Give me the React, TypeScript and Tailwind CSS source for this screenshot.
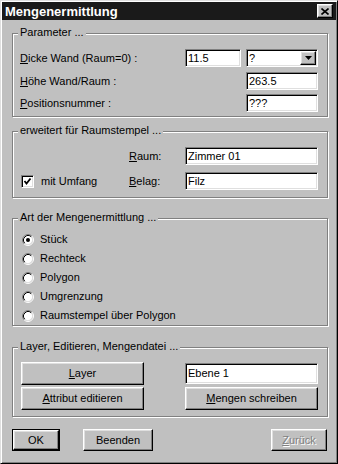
import React from "react"

// Win95-artige Rahmen
const raised =
  "bg-[#c0c0c0] border border-t-white border-l-white border-r-black border-b-black shadow-[inset_-1px_-1px_0_#808080,inset_1px_1px_0_#dfdfdf]"
const sunken =
  "bg-white border border-t-[#808080] border-l-[#808080] border-r-white border-b-white shadow-[inset_1px_1px_0_#000,inset_-1px_-1px_0_#dfdfdf]"

function U({ children }: { children: React.ReactNode }) {
  return <span className="underline decoration-1 underline-offset-[1px]">{children}</span>
}

function Group({ title, className, children }: { title: string; className: string; children?: React.ReactNode }) {
  return (
    <div className={`relative w-[316px] border border-[#808080] shadow-[1px_1px_0_#fff,inset_1px_1px_0_#fff] ${className}`}>
      <span className="absolute left-[5px] top-[-8px] bg-[#c0c0c0] px-[2px] leading-[13px]">{title}</span>
      {children}
    </div>
  )
}

function Feld({ value, className }: { value: string; className: string }) {
  return (
    <div className={`${sunken} flex items-center pl-[2px] leading-none ${className}`}>{value}</div>
  )
}

function Knopf({ children, className }: { children: React.ReactNode; className: string }) {
  return <div className={`${raised} flex items-center justify-center ${className}`}>{children}</div>
}

function Radio({ checked, label }: { checked?: boolean; label: string }) {
  return (
    <div className="flex h-[19px] items-center gap-[6px] pl-[9px]">
      <svg width="12" height="12" viewBox="0 0 12 12">
        <circle cx="6" cy="6" r="4.5" fill="#fff" />
        <path d="M2.11 9.89 A5.5 5.5 0 0 1 9.89 2.11" fill="none" stroke="#808080" />
        <path d="M9.89 2.11 A5.5 5.5 0 0 1 2.11 9.89" fill="none" stroke="#fff" />
        <path d="M2.82 9.18 A4.5 4.5 0 0 1 9.18 2.82" fill="none" stroke="#000" />
        <path d="M9.18 2.82 A4.5 4.5 0 0 1 2.82 9.18" fill="none" stroke="#dfdfdf" />
        {checked && <circle cx="6" cy="6" r="2" fill="#000" />}
      </svg>
      <span>{label}</span>
    </div>
  )
}

export default function App() {
  return (
    <div className="flex h-[464px] w-[338px] flex-col border border-t-[#dfdfdf] border-l-[#dfdfdf] border-r-black border-b-black bg-[#c0c0c0] font-['Liberation_Sans',Arial,sans-serif] text-[11px] leading-[13px] text-black shadow-[inset_1px_1px_0_#fff,inset_-1px_-1px_0_#808080]">
      {/* Titelleiste */}
      <div className="mx-[1px] mt-[1px] flex h-[18px] items-center bg-[#1a1a1a] pl-[3px]">
        <span className="flex-1 text-[13px] font-bold leading-[15px] text-white">Mengenermittlung</span>
        <Knopf className="mr-[3px] h-[14px] w-[16px]">
          <svg width="8" height="7" viewBox="0 0 8 7">
            <path d="M0.5 0.5 L7.5 6.5 M7.5 0.5 L0.5 6.5" stroke="#000" strokeWidth="1.6" />
          </svg>
        </Knopf>
      </div>

      <div className="ml-[11px] flex flex-col">
        {/* Parameter */}
        <Group title="Parameter ..." className="mt-[13px] h-[84px]">
          <div className="mt-[15px] flex h-[18px] items-center pl-[7px] pr-[9px]">
            <span className="flex-1">
              <U>D</U>icke Wand (Raum=0) :
            </span>
            <Feld value="11.5" className="h-full w-[56px]" />
            <div className={`${sunken} ml-[5px] flex h-full w-[72px] items-center`}>
              <span className="flex-1 pl-[2px] leading-none">?</span>
              <Knopf className="mr-[1px] h-[14px] w-[16px]">
                <svg width="7" height="4" viewBox="0 0 7 4">
                  <polygon points="0,0 7,0 3.5,4" fill="#000" />
                </svg>
              </Knopf>
            </div>
          </div>
          <div className="mt-[5px] flex h-[18px] items-center pl-[7px] pr-[9px]">
            <span className="flex-1">
              <U>H</U>öhe Wand/Raum :
            </span>
            <Feld value="263.5" className="h-full w-[72px]" />
          </div>
          <div className="mt-[4px] flex h-[18px] items-center pl-[7px] pr-[9px]">
            <span className="flex-1">
              <U>P</U>ositionsnummer :
            </span>
            <Feld value="???" className="h-full w-[72px]" />
          </div>
        </Group>

        {/* Raumstempel */}
        <Group title="erweitert für Raumstempel ..." className="mt-[14px] h-[67px]">
          <div className="mt-[15px] flex h-[18px] items-center pl-[8px]">
            <div className="w-[108px]" />
            <span className="w-[56px]">
              <U>R</U>aum:
            </span>
            <Feld value="Zimmer 01" className="h-full w-[133px]" />
          </div>
          <div className="mt-[7px] flex h-[18px] items-center pl-[8px]">
            <div className="flex w-[108px] items-center gap-[7px]">
              <div className={`${sunken} flex h-[13px] w-[13px] items-center justify-center`}>
                <svg width="9" height="9" viewBox="0 0 9 9">
                  <polyline points="1.5,4 3.5,6.5 7.5,1.5" fill="none" stroke="#000" strokeWidth="1.8" />
                </svg>
              </div>
              <span>mit Umfang</span>
            </div>
            <span className="w-[56px]">
              <U>B</U>elag:
            </span>
            <Feld value="Filz" className="h-full w-[133px]" />
          </div>
        </Group>

        {/* Art der Mengenermittlung */}
        <Group title="Art der Mengenermittlung ..." className="mt-[20px] h-[108px]">
          <div className="mt-[11px] flex flex-col">
            <Radio checked label="Stück" />
            <Radio label="Rechteck" />
            <Radio label="Polygon" />
            <Radio label="Umgrenzung" />
            <Radio label="Raumstempel über Polygon" />
          </div>
        </Group>

        {/* Layer */}
        <Group title="Layer, Editieren, Mengendatei ..." className="mt-[21px] h-[70px]">
          <div className="mt-[14px] flex h-[23px] items-center justify-between pl-[8px] pr-[9px]">
            <Knopf className="h-full w-[123px]">
              <U>L</U>ayer
            </Knopf>
            <Feld value="Ebene 1" className="h-[21px] w-[133px]" />
          </div>
          <div className="mt-[2px] flex h-[23px] items-center justify-between pl-[8px] pr-[9px]">
            <Knopf className="h-full w-[123px]">
              <U>A</U>ttribut editieren
            </Knopf>
            <Knopf className="h-full w-[133px]">
              <U>M</U>engen schreiben
            </Knopf>
          </div>
        </Group>
      </div>

      {/* Schaltflächen */}
      <div className="mt-[12px] flex h-[22px] items-stretch pl-[11px] pr-[10px]">
        <div className="w-[48px] border border-black">
          <Knopf className="h-full w-full">OK</Knopf>
        </div>
        <Knopf className="ml-[23px] w-[70px]">Beenden</Knopf>
        <Knopf className="ml-auto w-[56px] text-[#808080] [text-shadow:1px_1px_0_#fff]">
          <U>Z</U>urück
        </Knopf>
      </div>
    </div>
  )
}
